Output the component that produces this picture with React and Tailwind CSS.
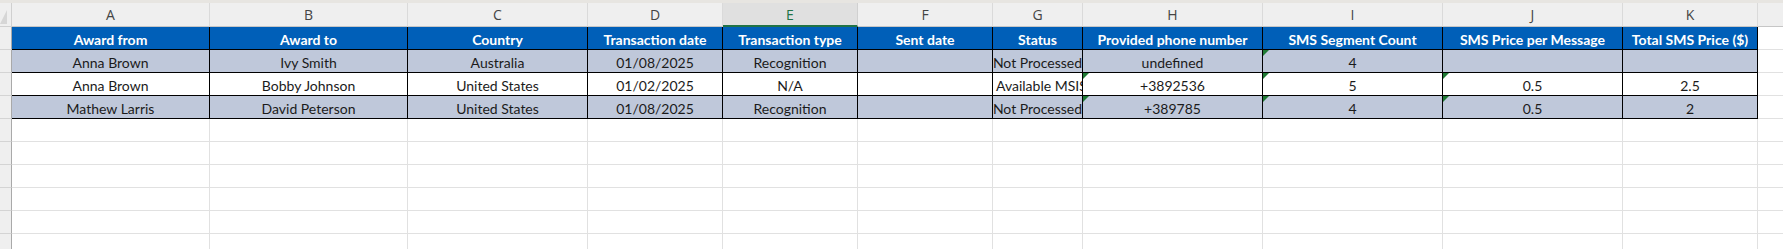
import React from 'react';

// column widths include the 1px right border
const columns = [
    { key: 'A', w: 'w-[198px]', title: 'Award from' },
    { key: 'B', w: 'w-[198px]', title: 'Award to' },
    { key: 'C', w: 'w-[180px]', title: 'Country' },
    { key: 'D', w: 'w-[135px]', title: 'Transaction date' },
    { key: 'E', w: 'w-[135px]', title: 'Transaction type' },
    { key: 'F', w: 'w-[135px]', title: 'Sent date' },
    { key: 'G', w: 'w-[90px]', title: 'Status' },
    { key: 'H', w: 'w-[180px]', title: 'Provided phone number' },
    { key: 'I', w: 'w-[180px]', title: 'SMS Segment Count' },
    { key: 'J', w: 'w-[180px]', title: 'SMS Price per Message' },
    { key: 'K', w: 'w-[135px]', title: 'Total SMS Price ($)' },
];

const rows = [
    {
        bg: 'bg-[#bfc8da]',
        cells: ['Anna Brown', 'Ivy Smith', 'Australia', '01/08/2025', 'Recognition', '', 'Not Processed', 'undefined', '4', '', ''],
        flags: ['I'],
    },
    {
        bg: 'bg-white',
        cells: ['Anna Brown', 'Bobby Johnson', 'United States', '01/02/2025', 'N/A', '', 'Available MSISDNs', '+3892536', '5', '0.5', '2.5'],
        flags: ['H', 'I', 'J'],
        leftStatus: true,
    },
    {
        bg: 'bg-[#bfc8da]',
        cells: ['Mathew Larris', 'David Peterson', 'United States', '01/08/2025', 'Recognition', '', 'Not Processed', '+389785', '4', '0.5', '2'],
        flags: ['H', 'I', 'J'],
    },
];

const Flag = () => (
    <svg width="6" height="6" className="absolute top-0 left-0">
        <polygon points="0,0 6,0 0,6" fill="#1f7a34" />
    </svg>
);

const RowHead = () => (
    <div className="w-[12px] shrink-0 h-full bg-[#efefef] border-r border-r-[#a9a9a9] border-b border-b-[#d4d4d4]" />
);

const ColumnLetters = () => (
    <div className="flex h-[24px] bg-[#efefef] font-['Open_Sans',sans-serif] text-[14px] text-[#444]">
        <div className="relative w-[12px] shrink-0 border-r border-b border-[#d0d0d0]">
            <svg width="8" height="23" className="absolute top-0 left-0">
                <polygon points="7,7 7,21 0,21" fill="#d6d6d6" />
            </svg>
        </div>
        {columns.map((c) =>
            c.key === 'E' ? (
                <div
                    key={c.key}
                    className={`${c.w} shrink-0 flex items-center justify-center bg-[#e0e0e0] border-r border-r-[#d0d0d0] border-b-2 border-b-[#217346] text-[#217346]`}
                >
                    {c.key}
                </div>
            ) : (
                <div
                    key={c.key}
                    className={`${c.w} shrink-0 flex items-center justify-center border-r border-r-[#dadada] border-b border-b-[#c6c6c6]`}
                >
                    {c.key}
                </div>
            )
        )}
        <div className="flex-1 border-b border-[#c6c6c6]" />
    </div>
);

const HeaderRow = () => (
    <div className="flex h-[23px] font-['Lato',sans-serif] text-[14px] font-bold text-white">
        <RowHead />
        {columns.map((c) => (
            <div
                key={c.key}
                className={`${c.w} shrink-0 flex items-center justify-center pt-[3px] bg-[#005fb8] border-r border-b border-black whitespace-nowrap overflow-hidden`}
            >
                {c.title}
            </div>
        ))}
        <div className="flex-1 border-b border-[#e1e1e1]" />
    </div>
);

const DataRow = ({ row }) => (
    <div className="flex h-[23px] font-['Lato',sans-serif] text-[14px] text-[#1b1b1b]">
        <RowHead />
        {columns.map((c, i) => {
            const isStatus = c.key === 'G';
            const align = isStatus && row.leftStatus ? 'justify-start pl-[3px]' : 'justify-center';
            return (
                <div
                    key={c.key}
                    className={`${c.w} ${row.bg} ${align} relative shrink-0 flex items-center pt-[3px] border-r border-b border-black whitespace-nowrap overflow-hidden`}
                >
                    {row.flags.includes(c.key) && <Flag />}
                    {row.cells[i]}
                </div>
            );
        })}
        <div className="flex-1 border-b border-[#e1e1e1]" />
    </div>
);

const EmptyRow = () => (
    <div className="flex h-[23px]">
        <RowHead />
        {columns.map((c) => (
            <div key={c.key} className={`${c.w} shrink-0 border-r border-b border-[#e1e1e1]`} />
        ))}
        <div className="flex-1 border-b border-[#e1e1e1]" />
    </div>
);

export default function App() {
    return (
        <div className="w-[1783px] h-[249px] overflow-hidden bg-white">
            <div className="h-[3px] bg-[#e7e5e1]" />
            <ColumnLetters />
            <HeaderRow />
            {rows.map((r, i) => (
                <DataRow key={i} row={r} />
            ))}
            {[0, 1, 2, 3, 4, 5].map((i) => (
                <EmptyRow key={i} />
            ))}
        </div>
    );
}
